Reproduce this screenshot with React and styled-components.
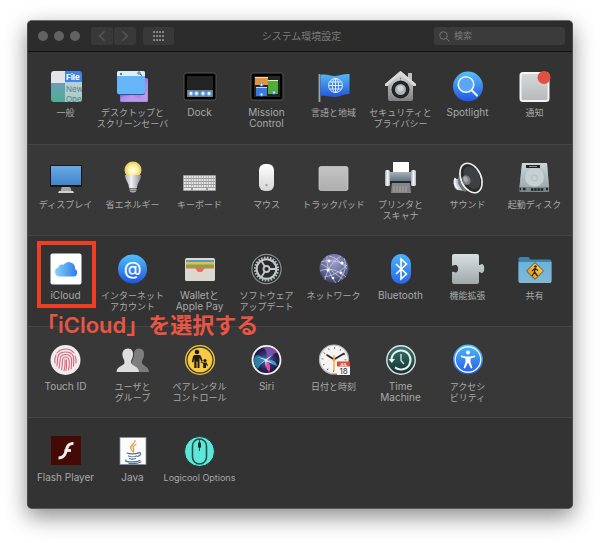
import React from 'react';
import styled, { createGlobalStyle } from 'styled-components';

const GlobalStyle = createGlobalStyle`
	* {
		box-sizing: border-box;
	}
	body {
		margin: 0;
		background-color: #fff;
		font-family: Inter, "Noto Sans CJK JP", sans-serif;
	}
	button, input {
		font-family: inherit;
	}
`;

const Desktop = styled.main`
	padding: 20px 27px 34px;
`;

const Window = styled.div`
	border: 1px solid #555;
	border-color: #6a6d6a #4c4c4c #5a5a5a;
	border-radius: 5px;
	background-color: #333;
	box-shadow: 0 8px 22px rgba(0, 0, 0, 0.45);
`;

const TitleBar = styled.header`
	display: grid;
	grid-template-columns: 1fr auto 1fr;
	align-items: center;
	height: 31px;
	padding: 0 7px 0 10px;
	border-bottom: 1px solid #111;
	border-radius: 4px 4px 0 0;
	background-color: #2c2c2c;
`;

const Controls = styled.div`
	display: flex;
	align-items: center;
`;

const Lights = styled.div`
	display: flex;
	gap: 6px;
	margin-right: 11px;
`;

const Light = styled.button`
	width: 10px;
	height: 10px;
	padding: 0;
	border: none;
	border-radius: 50%;
	background-color: #626262;
`;

const ToolButton = styled.button`
	display: flex;
	align-items: center;
	justify-content: center;
	width: ${({ $wide }) => ($wide ? 31 : 22)}px;
	height: 18px;
	margin-right: ${({ $gap }) => $gap}px;
	padding: 0;
	border: none;
	border-radius: 3px;
	background-color: #393939;
	color: ${({ $wide }) => ($wide ? '#8c8c8c' : '#5c5c5c')};
`;

const Title = styled.h1`
	margin: 0;
	font-size: 10px;
	font-weight: 400;
	line-height: 18px;
	color: #7c7c7c;
`;

const Search = styled.label`
	display: flex;
	align-items: center;
	justify-self: end;
	gap: 4px;
	width: 131px;
	height: 18px;
	padding: 0 5px;
	border-radius: 3px;
	background-color: #3b3b3b;
	color: #747474;
`;

const SearchInput = styled.input`
	flex: 1;
	min-width: 0;
	padding: 0;
	border: none;
	outline: none;
	background: transparent;
	font-size: 9px;
	line-height: 18px;
	color: #aaa;

	&::placeholder {
		color: #7c7c7c;
		opacity: 1;
	}
`;

const Row = styled.section`
	position: relative;
	display: grid;
	grid-template-columns: repeat(8, 1fr);
	align-items: start;
	min-height: 91px;
	padding: 16px 4px 0;
	border-top: 1px solid #454545;
	background-color: #333;

	&:nth-of-type(even) {
		background-color: #383838;
	}
	&:first-of-type {
		min-height: 92px;
		border-top-color: #333;
	}
	&:last-of-type {
		border-radius: 0 0 4px 4px;
	}
`;

const Pane = styled.button`
	position: relative;
	display: flex;
	flex-direction: column;
	align-items: center;
	gap: 4px;
	min-width: 0;
	padding: 0;
	border: none;
	background: transparent;
	color: #a9a9a9;

	svg {
		display: block;
		overflow: visible;
	}
`;

const Label = styled.span`
	font-size: ${({ $latin }) => ($latin ? 10 : 9)}px;
	line-height: 11px;
	text-align: center;
	white-space: nowrap;
`;

const Line = styled.span`
	display: block;
`;

const Highlight = styled.span`
	position: absolute;
	top: -11px;
	left: 5px;
	width: 59px;
	height: 67px;
	border: 4px solid #ee3e24;
`;

const Note = styled.p`
	position: absolute;
	top: 75px;
	left: 8px;
	z-index: 1;
	margin: 0;
	font-size: 22px;
	font-weight: 600;
	line-height: 28px;
	white-space: nowrap;
	color: #ea5544;
`;

const Icon = ({ children }) => (
	<svg width="34" height="34" viewBox="0 0 34 34" fill="none" aria-hidden="true">
		{children}
	</svg>
);

const Fade = ({ id, from, to }) => (
	<linearGradient id={id} x1="0" y1="0" x2="0" y2="1">
		<stop offset="0" stopColor={from} />
		<stop offset="1" stopColor={to} />
	</linearGradient>
);

const General = () => (
	<Icon>
		<clipPath id="generalClip"><rect x="2" y="2" width="31" height="31" rx="3" /></clipPath>
		<Fade id="generalSide" from="#6d9cb8" to="#4fae94" />
		<Fade id="generalMenu" from="#bccdd8" to="#a5cdc8" />
		<g clipPath="url(#generalClip)">
			<path d="M2 2h14v12H2z" fill="#e4e4e6" />
			<path d="M2 14h14v19H2z" fill="url(#generalSide)" />
			<path d="M16 2h17v11H16z" fill="#3c87e4" />
			<path d="M16 13h17v20H16z" fill="url(#generalMenu)" />
			<g fontFamily="Inter, sans-serif" fontSize="8">
				<text x="17" y="11" fill="#fff" fontWeight="700">File</text>
				<text x="17" y="23" fill="#607f8b">New</text>
				<text x="17" y="33" fill="#51817f">Open</text>
			</g>
		</g>
	</Icon>
);

const DesktopIcon = () => (
	<Icon>
		<linearGradient id="deskBack" x1="0" y1="0" x2="1" y2="1">
			<stop offset="0" stopColor="#4a3fae" />
			<stop offset=".6" stopColor="#a98ce8" />
			<stop offset="1" stopColor="#b58cd8" />
		</linearGradient>
		<rect x="4" y="9" width="28" height="24" rx="1.5" fill="url(#deskBack)" />
		<path d="M5 28l10-2 8 3 8-7v10H5z" fill="#c8a4f2" opacity=".5" />
		<rect x="1" y="2" width="28" height="24" rx="2" fill="#285a98" />
		<rect x="1" y="2" width="28" height="23" rx="2" fill="#67b4f8" />
		<path d="M1 7V4q0-2 2-2h24q2 0 2 2v3z" fill="#d7f1fa" />
		<circle cx="5" cy="5" r="1" fill="#39506a" />
		<circle cx="23" cy="4" r="1.2" stroke="#39506a" strokeWidth=".8" />
		<path d="M24 5l2 1.500" stroke="#39506a" />
	</Icon>
);

const Dock = () => (
	<Icon>
		<rect x="1" y="4" width="32" height="27" rx="2" fill="#000" stroke="#555" />
		<rect x="4" y="7" width="26" height="21" fill="#232323" />
		<rect x="4" y="21" width="26" height="7" fill="#6f7a86" />
		{[8, 13.5, 20, 26].map((x) => (
			<g key={x}>
				<circle cx={x} cy="24.500" r="2.600" fill="#5fabf7" />
				<circle cx={x} cy="24.500" r="1.400" fill="#f1f7ff" />
			</g>
		))}
	</Icon>
);

const MissionControl = () => (
	<Icon>
		<rect x="1" y="4" width="32" height="27" rx="2" fill="#000" stroke="#555" />
		<rect x="4" y="7" width="26" height="21" fill="#252525" />
		<rect x="5" y="8" width="13" height="8" fill="#e8923b" />
		<path d="M5 8h13v1H5z" fill="#f6d9b8" />
		<rect x="18" y="11" width="10" height="14" fill="#50ad36" />
		<path d="M18 11h10v1H18z" fill="#d6efcd" />
		<rect x="6" y="18" width="11" height="9" fill="#3979e0" />
		<path d="M6 18h11v1H6z" fill="#c9dcfb" />
		{[[11.5, 15.5], [24, 23.5], [11.5, 25.5]].map(([x, y]) => (
			<g key={`${x}-${y}`}>
				<circle cx={x} cy={y} r="2" fill="#4b9ff5" />
				<circle cx={x} cy={y} r=".9" fill="#fff" />
			</g>
		))}
	</Icon>
);

const Region = () => (
	<Icon>
		<Fade id="flag" from="#55b8f7" to="#2555d8" />
		<path d="M2.500 5v28" stroke="#9ba6b6" strokeWidth="1.800" />
		<path d="M3.500 6c6-1.500 10 1.500 15 1 5-.5 9-2.500 14-2v20c-5-.5-9 2.500-14 3-5 .4-9-2-15-1z" fill="url(#flag)" />
		<g stroke="#e6f3ff" strokeWidth=".9">
			<circle cx="18.500" cy="16.500" r="7" />
			<ellipse cx="18.500" cy="16.500" rx="3.200" ry="7" />
			<path d="M18.500 9.500v14M11.500 16.500h14M12.500 13h12M12.500 20h12" />
		</g>
	</Icon>
);

const Security = () => (
	<Icon>
		<Fade id="house" from="#e0e0e0" to="#7d7f80" />
		<path d="M24 4h4v9h-4z" fill="#bfc1c2" />
		<path d="M16.500 2L32 15v2h-3v13q0 2-2 2H6q-2 0-2-2V17H1v-2z" fill="url(#house)" />
		<path d="M16.500 2L32 15v2h-2L16.500 5 3 17H1v-2z" fill="#d9dadb" />
		<circle cx="16.500" cy="20.500" r="9" fill="#1e1f20" />
		<circle cx="16.500" cy="20.500" r="7" stroke="#4b4d4e" strokeDasharray=".6 1.400" />
		<circle cx="16.500" cy="20.500" r="5.500" fill="#aeb2b4" />
		<circle cx="16.500" cy="19.500" r="3" fill="#cfd3d5" />
		<circle cx="16.500" cy="9.500" r=".7" fill="#666" />
	</Icon>
);

const Spotlight = () => (
	<Icon>
		<Fade id="spot" from="#53c1fa" to="#2455e2" />
		<circle cx="17" cy="17.500" r="15" fill="url(#spot)" />
		<circle cx="15" cy="15.500" r="7.800" fill="#5ba7f5" stroke="#eaf4ff" strokeWidth="1.600" />
		<path d="M21 21.500l5 5" stroke="#eaf4ff" strokeWidth="2.200" strokeLinecap="round" />
	</Icon>
);

const Notifications = () => (
	<Icon>
		<Fade id="notice" from="#d7d8da" to="#b6b8ba" />
		<rect x="2.500" y="4" width="28" height="28" rx="2.500" fill="url(#notice)" stroke="#f4f4f4" strokeWidth="2" />
		<circle cx="26" cy="8.500" r="6.500" fill="#e25041" />
	</Icon>
);

const Display = () => (
	<Icon>
		<Fade id="screen" from="#6ba9e6" to="#4383c9" />
		<path d="M13 25h8l2 7H11z" fill="#a5a5a5" />
		<path d="M10 30h14l1 2H9z" fill="#d0d0d0" />
		<rect x="1" y="4" width="32" height="22" rx="1" fill="#17191c" />
		<rect x="2" y="5" width="30" height="19" fill="url(#screen)" />
	</Icon>
);

const Energy = () => (
	<Icon>
		<radialGradient id="glow">
			<stop offset="0" stopColor="#fffef0" />
			<stop offset=".5" stopColor="#fdf6a3" />
			<stop offset="1" stopColor="#e9c85c" />
		</radialGradient>
		<linearGradient id="bulbBody">
			<stop offset="0" stopColor="#a9abb5" />
			<stop offset=".4" stopColor="#f0f1f5" />
			<stop offset="1" stopColor="#898b94" />
		</linearGradient>
		<circle cx="17" cy="9" r="8.500" fill="url(#glow)" />
		<path d="M9 14h16c0 5-4 8-4 13h-8c0-5-4-8-4-13z" fill="url(#bulbBody)" />
		<path d="M13.500 27h7v3q-3.500 4-7 0z" fill="#777b81" />
		<path d="M13.500 28.500h7M14 30.500h6" stroke="#c9ccd0" strokeWidth=".6" />
	</Icon>
);

const Keyboard = () => (
	<Icon>
		<rect x="0" y="14" width="33" height="16" rx="1" fill="#9c9c9c" />
		{[16, 19, 22, 25].map((y) => (
			<path key={y} d={`M1 ${y}h31`} stroke="#e6e6e6" strokeWidth="2" strokeDasharray="1.800 .7" />
		))}
		<path d="M1 28h7M10 28h13M25 28h7" stroke="#e2e2e2" strokeWidth="2" />
	</Icon>
);

const Mouse = () => (
	<Icon>
		<Fade id="mouse" from="#fff" to="#d5d5d5" />
		<rect x="9" y="3" width="15" height="27" rx="6" fill="url(#mouse)" />
		<circle cx="16.500" cy="24" r="1.200" fill="#a5a5a5" />
	</Icon>
);

const Trackpad = () => (
	<Icon>
		<Fade id="pad" from="#c4c4c4" to="#aeaeae" />
		<rect x="2" y="5.500" width="29" height="24" rx="2" fill="url(#pad)" stroke="#d4d4d4" strokeWidth=".7" />
	</Icon>
);

const Printer = () => (
	<Icon>
		<linearGradient id="paperEnds">
			<stop offset="0" stopColor="#a4abb2" />
			<stop offset=".5" stopColor="#f5f5f5" />
			<stop offset="1" stopColor="#b0b5b9" />
		</linearGradient>
		<Fade id="printerBody" from="#a5b0bd" to="#5c6875" />
		<path d="M9 1h16v11H9z" fill="#fff" />
		<path d="M5 11h24v11H5z" fill="url(#printerBody)" />
		<path d="M5 20h24v3H5z" fill="#222a31" />
		<rect x="1" y="9" width="5" height="16" rx="1.500" fill="url(#paperEnds)" />
		<rect x="27" y="9" width="5" height="16" rx="1.500" fill="url(#paperEnds)" />
		<path d="M8 22h18l1 10H7z" fill="#858585" />
		<path d="M10 25v6M13 25v6M16 25v6M19 25v6M22 25v6" stroke="#a2a2a2" />
	</Icon>
);

const Sound = () => (
	<Icon>
		<path d="M4 18c-2 1-2 8 2 11l9 1-3-12z" fill="#c8cad4" />
		<path d="M4.500 17c-2 3-1 8 3 11" stroke="#f2f2f7" strokeWidth="2" />
		<path d="M9 16c-2 4 0 10 6 14" stroke="#70727c" strokeWidth="3" />
		<g transform="rotate(-24 20 17)">
			<ellipse cx="20" cy="17" rx="10" ry="15.500" fill="#292a2c" stroke="#f0f0f0" strokeWidth="1.600" />
			<ellipse cx="21" cy="17" rx="7.500" ry="12" fill="#3f4043" />
			<ellipse cx="15" cy="17" rx="4" ry="5" fill="#7a8184" />
			<ellipse cx="14.500" cy="16" rx="2" ry="3" fill="#a5acae" />
		</g>
	</Icon>
);

const StartupDisk = () => (
	<Icon>
		<Fade id="disk" from="#cdd7da" to="#9eaaae" />
		<path d="M4 2h25l2 24v5H1.500v-5z" fill="#7b868a" />
		<path d="M4 2h25l2 24H1.500z" fill="url(#disk)" />
		<circle cx="16.500" cy="16" r="10" fill="#c5d0d3" stroke="#a3afb3" strokeWidth=".6" />
		<circle cx="16.500" cy="17" r="3" stroke="#a3afb3" strokeWidth=".6" />
		<path d="M8 4h14v3H8z" fill="#202527" />
		<path d="M11 5.500h8" stroke="#849094" />
		<path d="M2 28h1M5 28h3M13 28.500h13M28 28h2" stroke="#1e2325" strokeWidth="2.500" strokeDasharray="2.500 .7" />
	</Icon>
);

const ICloud = () => (
	<Icon>
		<linearGradient id="cloud">
			<stop offset="0" stopColor="#83d2f8" />
			<stop offset="1" stopColor="#2f7be9" />
		</linearGradient>
		<rect x="1.500" y="1.500" width="31" height="31" rx="2" fill="#fff" />
		<path d="M10.500 24.500a4.600 4.600 0 0 1-1.200-9 4.200 4.200 0 0 1 5.200-2.700 6.400 6.400 0 0 1 11.600 4.200 4 4 0 0 1-1.100 7.500z" fill="url(#cloud)" />
	</Icon>
);

const InternetAccounts = () => (
	<Icon>
		<Fade id="at" from="#4fc0f9" to="#2254e0" />
		<circle cx="16.500" cy="17" r="14.500" fill="url(#at)" />
		<text x="16.500" y="22.500" textAnchor="middle" fontFamily="Inter, sans-serif" fontSize="18" fontWeight="500" fill="#fff">@</text>
	</Icon>
);

const Wallet = () => (
	<Icon>
		<rect x="2" y="6" width="30" height="23" rx="2" fill="#ddd9d0" />
		<path d="M3 8h28v3H3z" fill="#4a9fd1" />
		<path d="M3 10h28v3H3z" fill="#f0b840" />
		<path d="M3 12.500h28v3H3z" fill="#6cb04b" />
		<path d="M3 15h28v5H3z" fill="#e56e5d" />
		<path d="M2 16.500h10c2 0 1.500 3.500 5 3.500s3-3.500 5-3.500h10V27q0 2-2 2H4q-2 0-2-2z" fill="#dcd8d0" />
		<path d="M12 16.500c2 0 1.500 3.500 5 3.500s3-3.500 5-3.500z" fill="#e56e5d" />
	</Icon>
);

const SoftwareUpdate = () => (
	<Icon>
		<circle cx="16.500" cy="17" r="14.600" fill="#27292a" stroke="#8d9294" strokeWidth="1.200" />
		<circle cx="16.500" cy="17" r="11.600" stroke="#b9bdbd" strokeWidth="2" strokeDasharray="1.700 1.337" />
		<circle cx="16.500" cy="17" r="9.800" stroke="#c4c8c8" strokeWidth="2" />
		<circle cx="16.500" cy="17" r="3" stroke="#c4c8c8" strokeWidth="1.800" />
		<path d="M19 17h7.500M15 14.800l-4-6.500M15 19.200l-4 6.500" stroke="#c4c8c8" strokeWidth="1.800" />
	</Icon>
);

const Network = () => (
	<Icon>
		<radialGradient id="net" cx=".5" cy=".3" r=".75">
			<stop offset="0" stopColor="#9c9fc9" />
			<stop offset=".6" stopColor="#626797" />
			<stop offset="1" stopColor="#343956" />
		</radialGradient>
		<circle cx="17" cy="16.500" r="14.500" fill="url(#net)" />
		<g stroke="#dfe1f5" strokeWidth=".7" opacity=".9">
			<path d="M4 10c8-3 17-1 26 4M3 19c9-4 18-1 26 6M10 4c-1 9 3 20 9 27M24 4C16 9 10 17 8 28M27 6c3 7 1 16-6 24M4 12c7 3 14 10 22 15M12 4c7 2 13 7 18 13M7 25c8-1 16-5 23-12" />
		</g>
		<g fill="#fff">
			<circle cx="12" cy="9" r="1.400" />
			<circle cx="25" cy="11" r="1.600" />
			<circle cx="11" cy="18" r="1.500" />
			<circle cx="24" cy="21" r="1.400" />
			<circle cx="16" cy="26" r="1.300" />
		</g>
	</Icon>
);

const Bluetooth = () => (
	<Icon>
		<Fade id="blue" from="#4bb5fa" to="#2766eb" />
		<rect x="7" y="2" width="20" height="30" rx="10" fill="url(#blue)" />
		<path d="M12 12l10.500 10L17 27V7l5.500 5L12 22" stroke="#fff" strokeWidth="1.600" />
	</Icon>
);

const Extensions = () => (
	<Icon>
		<Fade id="puzzle" from="#d7dfe0" to="#a0a8aa" />
		<path d="M3 2h23q2 0 2 2v9c1.500.5 1.500-1 3-1 3 0 3 9 0 9-1.500 0-1.500-1.500-3-1v10q0 2-2 2H3q-2 0-2-2V20c1.500-.5 2 .5 3.500.5 3.500 0 3.500-7.500 0-7.500-1.500 0-2 1-3.500.5V4q0-2 2-2z" fill="url(#puzzle)" />
	</Icon>
);

const Sharing = () => (
	<Icon>
		<Fade id="folder" from="#69b3dc" to="#83b9d6" />
		<Fade id="sign" from="#f8c94a" to="#e99a24" />
		<path d="M.5 7q0-2 2-2h8l2 2.500h19q2 0 2 2V29q0 2-2 2h-29q-2 0-2-2z" fill="#4383a8" />
		<path d="M.5 10h33v19q0 2-2 2h-29q-2 0-2-2z" fill="url(#folder)" />
		<rect x="11" y="13" width="12" height="12" rx="1" transform="rotate(45 17 19)" fill="url(#sign)" stroke="#4a3c1f" strokeWidth=".8" />
		<circle cx="17.500" cy="14.500" r="1.300" fill="#2d2718" />
		<path d="M17 16l-.5 4-2.500 4M16.500 20l3 4M14 19l3-2.500 3 2" stroke="#2d2718" strokeWidth="1.300" />
	</Icon>
);

const TouchId = () => (
	<Icon>
		<circle cx="16.500" cy="17" r="15" fill="#eee" />
		<g stroke="#e5607a" strokeWidth="1.100" strokeLinecap="round">
			<path d="M8 10a11 11 0 0 1 17 0M6 20c-.5-3 0-6 1-8M27 20c.5-3 0-5-1-7" />
			<path d="M8 23c1-7-1-14 8.500-14S25 16 24.500 23" />
			<path d="M10 25c2-7-1-13.500 6.500-13.500S23 18 22 26" />
			<path d="M12.500 26.500c2-6-1-12.500 4-12.500S20.500 21 19.500 27" />
			<path d="M15 27.500c1.500-4 1-6 1-11M17.500 17c0 4 .2 7-.5 10.500" />
		</g>
	</Icon>
);

const Users = () => (
	<Icon>
		<path d="M23 5.500c4 0 5.500 3 5 7-.3 3-2 4-2 7 0 3.500 6.500 3 7 9.500H12l6-16c-.5-4 1-7.500 5-7.500z" fill="#7d7d7d" />
		<path d="M12 5.500c4 0 5.500 3 5 7-.3 3-2 4-2 7 0 3.500 7.500 3 8 9.500H.500c.5-6.500 8-6 8-9.500 0-3-1.700-4-2-7-.5-4 1.500-7 5.500-7z" fill="#dedede" />
	</Icon>
);

const Parental = () => (
	<Icon>
		<circle cx="17" cy="17" r="15" fill="#f6ca44" />
		<circle cx="17" cy="17" r="13" stroke="#413817" strokeWidth="1.300" />
		<g fill="#211d0e">
			<circle cx="14" cy="9" r="2.300" />
			<path d="M11.500 12h5q1 0 1.300 1l2 5-1.300.8-2-4V25h-2v-6.500h-1V25h-2.200v-9.500l-1 4-1.500-.5 1.200-5.500q.3-1.500 1.500-1.500z" />
			<circle cx="22" cy="17.500" r="1.600" />
			<path d="M18 18.500l2 1h3.500l1.500 3-1 .5-1-1.500V25h-2.800v-4.500l-2.500-1z" />
		</g>
	</Icon>
);

const Siri = () => (
	<Icon>
		<radialGradient id="siri">
			<stop offset="0" stopColor="#4a6eb2" />
			<stop offset=".5" stopColor="#34306c" />
			<stop offset="1" stopColor="#151332" />
		</radialGradient>
		<circle cx="16.500" cy="17" r="14" fill="url(#siri)" stroke="#f1f1f1" strokeWidth="1.800" />
		<path d="M5 13c4-2 8 1 12 4-5 3-8 6-9 9-4-3-5-9-3-13z" fill="#2e9ec2" opacity=".75" />
		<path d="M12 5c5 0 5 7 5 12 3-4 8-8 11-7-1-3-8-9-16-5z" fill="#8a5bbd" opacity=".8" />
		<path d="M17 17c5-1 9 1 10 6-4-1-7-3-10-6z" fill="#45b8d8" opacity=".8" />
		<path d="M17 17c-2 4-1 9 2 12 2-3 1-9-2-12z" fill="#ec4da2" />
		<path d="M7 14l9 2 8-5-7 6 6 3.500-6.500-2-.5 6.500-1-7-6 4 6-5z" fill="#e8faff" opacity=".9" />
	</Icon>
);

const DateTime = () => (
	<Icon>
		<circle cx="17" cy="16.500" r="14.500" fill="#f4f4f2" stroke="#b8babc" strokeWidth="1.200" />
		<circle cx="17" cy="16.500" r="11.500" stroke="#555" strokeWidth="1.800" strokeDasharray=".8 5.221" />
		<path d="M10 12l7 4.500 10-6" stroke="#222" strokeWidth="1.600" strokeLinecap="round" />
		<path d="M17 12v16" stroke="#ee9b37" strokeWidth="1.200" />
		<circle cx="17" cy="16.500" r="1.500" fill="#ee9b37" />
		<path d="M20 19h13v13H20z" fill="#f7f7f7" />
		<path d="M20 18.500h13v5H20z" fill="#d94a3c" />
		<text x="26.500" y="22.500" textAnchor="middle" fontFamily="Inter, sans-serif" fontSize="4" fontWeight="700" fill="#fff">JUL</text>
		<text x="26.500" y="31" textAnchor="middle" fontFamily="Inter, sans-serif" fontSize="8" fill="#333">18</text>
	</Icon>
);

const TimeMachine = () => (
	<Icon>
		<Fade id="machine" from="#35776f" to="#13312f" />
		<circle cx="17" cy="17" r="14.200" fill="url(#machine)" stroke="#dfe4e3" strokeWidth="1.400" />
		<path d="M7.500 17a9.500 9.500 0 1 1 3.500 7.400" stroke="#edf2f1" strokeWidth="2" />
		<path d="M4.500 16h6.500l-3.200 4z" fill="#edf2f1" />
		<path d="M17 11v6.500l3 3.500" stroke="#d3dfdd" strokeWidth="1.400" />
	</Icon>
);

const Accessibility = () => (
	<Icon>
		<Fade id="access" from="#4cbcf8" to="#2858e4" />
		<circle cx="17" cy="16.500" r="15" fill="url(#access)" />
		<circle cx="17" cy="16.500" r="12.800" stroke="#e5f2ff" strokeWidth="1.400" />
		<circle cx="17" cy="9.500" r="2" fill="#fff" />
		<path d="M10 12.500l5 1h4l5-1 .3 1.500-4.800 1.500v3.500l2 6-1.500.6L17.300 20h-.6L14 25.600l-1.500-.6 2-6v-3.500L9.700 14z" fill="#fff" />
	</Icon>
);

const Flash = () => (
	<Icon>
		<rect x="2" y="2" width="30" height="29" fill="#430a06" />
		<path d="M24.500 9.500c-7-.5-6.500 6-8 9.500-1.200 3-3 5-7 5" stroke="#f4eeee" strokeWidth="3" />
		<path d="M15.500 16.500H22" stroke="#f4eeee" strokeWidth="2.800" />
	</Icon>
);

const Java = () => (
	<Icon>
		<rect x="4" y="3.500" width="26" height="27" fill="#fdfdfd" stroke="#8091a4" strokeWidth=".8" />
		<path d="M19 6c1 4-6 5-4 9l2 3M20.500 10c-4 2-4 3-3 5s.5 2.500-.5 3.500" stroke="#e39a43" strokeWidth="1.300" />
		<g stroke="#506f91" strokeWidth="1.200" strokeLinecap="round">
			<path d="M11 19c3 1.300 9 1 11 0M12.500 22c2 1 6 1 8 0M13.500 24.500c2 1 4 .8 6 0" />
			<path d="M22 19c4-1.500 3 2.500-.5 3.500" />
			<path d="M10 26c-3 2.500 10 2.500 14 .5M13 29.500c5 .4 9 0 12-1.500" />
		</g>
	</Icon>
);

const Logicool = () => (
	<Icon>
		<circle cx="16.500" cy="17.500" r="15" fill="#5ee7d8" stroke="#173936" />
		<rect x="9.500" y="5" width="14" height="25" rx="7" stroke="#22514d" strokeWidth="1.600" />
		<path d="M16.500 5v12" stroke="#22514d" />
		<rect x="15" y="8" width="3" height="6" rx="1.500" fill="#122c2b" />
	</Icon>
);

const rows = [
	[
		{ name: ['一般'], icon: General },
		{ name: ['デスクトップと', 'スクリーンセーバ'], icon: DesktopIcon },
		{ name: ['Dock'], icon: Dock, latin: true },
		{ name: ['Mission', 'Control'], icon: MissionControl, latin: true },
		{ name: ['言語と地域'], icon: Region },
		{ name: ['セキュリティと', 'プライバシー'], icon: Security },
		{ name: ['Spotlight'], icon: Spotlight, latin: true },
		{ name: ['通知'], icon: Notifications },
	],
	[
		{ name: ['ディスプレイ'], icon: Display },
		{ name: ['省エネルギー'], icon: Energy },
		{ name: ['キーボード'], icon: Keyboard },
		{ name: ['マウス'], icon: Mouse },
		{ name: ['トラックパッド'], icon: Trackpad },
		{ name: ['プリンタと', 'スキャナ'], icon: Printer },
		{ name: ['サウンド'], icon: Sound },
		{ name: ['起動ディスク'], icon: StartupDisk },
	],
	[
		{ name: ['iCloud'], icon: ICloud, latin: true, marked: true },
		{ name: ['インターネット', 'アカウント'], icon: InternetAccounts },
		{ name: ['Walletと', 'Apple Pay'], icon: Wallet, latin: true },
		{ name: ['ソフトウェア', 'アップデート'], icon: SoftwareUpdate },
		{ name: ['ネットワーク'], icon: Network },
		{ name: ['Bluetooth'], icon: Bluetooth, latin: true },
		{ name: ['機能拡張'], icon: Extensions },
		{ name: ['共有'], icon: Sharing },
	],
	[
		{ name: ['Touch ID'], icon: TouchId, latin: true },
		{ name: ['ユーザと', 'グループ'], icon: Users },
		{ name: ['ペアレンタル', 'コントロール'], icon: Parental },
		{ name: ['Siri'], icon: Siri, latin: true },
		{ name: ['日付と時刻'], icon: DateTime },
		{ name: ['Time', 'Machine'], icon: TimeMachine, latin: true },
		{ name: ['アクセシ', 'ビリティ'], icon: Accessibility },
	],
	[
		{ name: ['Flash Player'], icon: Flash, latin: true },
		{ name: ['Java'], icon: Java, latin: true },
		// too long for its column at the larger size
		{ name: ['Logicool Options'], icon: Logicool },
	],
];

const Header = () => (
	<TitleBar>
		<Controls>
			<Lights>
				<Light aria-label="閉じる" />
				<Light aria-label="しまう" />
				<Light aria-label="拡大" />
			</Lights>
			<ToolButton $gap={1} aria-label="戻る">
				<svg width="8" height="12" viewBox="0 0 8 12" fill="none" stroke="currentColor" strokeWidth="1.200">
					<path d="M6.500 1.500L1.500 6l5 4.500" />
				</svg>
			</ToolButton>
			<ToolButton $gap={7} aria-label="進む">
				<svg width="8" height="12" viewBox="0 0 8 12" fill="none" stroke="currentColor" strokeWidth="1.200">
					<path d="M1.500 1.500l5 4.500-5 4.500" />
				</svg>
			</ToolButton>
			<ToolButton $wide $gap={0} aria-label="すべてを表示">
				<svg width="13" height="10" viewBox="0 0 13 10" fill="currentColor">
					{[0, 4, 8].map((y) => [0, 3, 6, 9].map((x) => (
						<rect key={`${x}-${y}`} x={x + 1} y={y} width="2" height="2" rx=".5" />
					)))}
				</svg>
			</ToolButton>
		</Controls>
		<Title>システム環境設定</Title>
		<Search>
			<svg width="11" height="11" viewBox="0 0 11 11" fill="none" stroke="currentColor" aria-hidden="true">
				<circle cx="4.500" cy="4.500" r="3.800" />
				<path d="M7.300 7.300l3.200 3.200" />
			</svg>
			<SearchInput type="text" placeholder="検索" aria-label="検索" />
		</Search>
	</TitleBar>
);

const App = () => (
	<>
		<GlobalStyle />
		<Desktop>
			<Window>
				<Header />
				{rows.map((panes) => (
					<Row key={panes[0].name[0]}>
						{panes.map(({ name, icon: Picture, latin, marked }) => (
							<Pane key={name[0]}>
								<Picture />
								<Label $latin={latin}>
									{name.map((line) => <Line key={line}>{line}</Line>)}
								</Label>
								{marked && <Highlight />}
							</Pane>
						))}
						{panes.some((pane) => pane.marked) && <Note>「iCloud」を選択する</Note>}
					</Row>
				))}
			</Window>
		</Desktop>
	</>
);

export default App;
